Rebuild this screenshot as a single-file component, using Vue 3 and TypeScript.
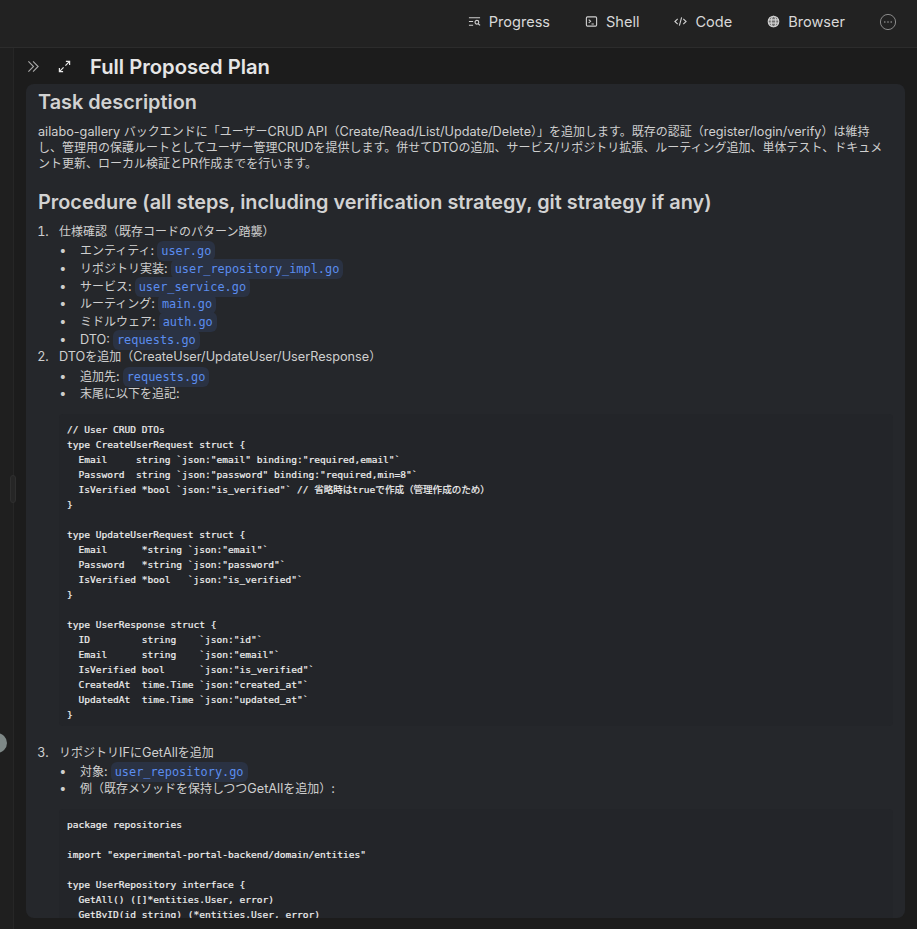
<script setup lang="ts">
const tabs = ['Progress', 'Shell', 'Code', 'Browser']

type Item = { text: string; code?: string }
type Step = { title: string; items: Item[]; block?: string }

const cjkRun = /[\u3000-\u30ff\u4e00-\u9fff\uff00-\uffef]+|[^\u3000-\u30ff\u4e00-\u9fff\uff00-\uffef]+/g
const isCjk = (s: string) => /[\u3000-\u30ff\u4e00-\u9fff\uff00-\uffef]/.test(s)
const runs = (s: string) => s.match(cjkRun) ?? []

const intro = [
  'ailabo-gallery バックエンドに「ユーザーCRUD API（Create/Read/List/Update/Delete）」を追加します。既存の認証（register/login/verify）は維持',
  'し、管理用の保護ルートとしてユーザー管理CRUDを提供します。併せてDTOの追加、サービス/リポジトリ拡張、ルーティング追加、単体テスト、ドキュメ',
  'ント更新、ローカル検証とPR作成までを行います。',
].flatMap(runs)

const dtoCode = `// User CRUD DTOs
type CreateUserRequest struct {
  Email     string \`json:"email" binding:"required,email"\`
  Password  string \`json:"password" binding:"required,min=8"\`
  IsVerified *bool \`json:"is_verified"\` // 省略時はtrueで作成（管理作成のため）
}

type UpdateUserRequest struct {
  Email      *string \`json:"email"\`
  Password   *string \`json:"password"\`
  IsVerified *bool   \`json:"is_verified"\`
}

type UserResponse struct {
  ID         string    \`json:"id"\`
  Email      string    \`json:"email"\`
  IsVerified bool      \`json:"is_verified"\`
  CreatedAt  time.Time \`json:"created_at"\`
  UpdatedAt  time.Time \`json:"updated_at"\`
}`
const repoCode = `package repositories

import "experimental-portal-backend/domain/entities"

type UserRepository interface {
  GetAll() ([]*entities.User, error)
  GetByID(id string) (*entities.User, error)
  GetByEmail(email string) (*entities.User, error)
}`

const steps: Step[] = [
  {
    title: '仕様確認（既存コードのパターン踏襲）',
    items: [
      { text: 'エンティティ:', code: 'user.go' },
      { text: 'リポジトリ実装:', code: 'user_repository_impl.go' },
      { text: 'サービス:', code: 'user_service.go' },
      { text: 'ルーティング:', code: 'main.go' },
      { text: 'ミドルウェア:', code: 'auth.go' },
      { text: 'DTO:', code: 'requests.go' },
    ],
  },
  {
    title: 'DTOを追加（CreateUser/UpdateUser/UserResponse）',
    items: [{ text: '追加先:', code: 'requests.go' }, { text: '末尾に以下を追記:' }],
    block: dtoCode,
  },
  {
    title: 'リポジトリIFにGetAllを追加',
    items: [
      { text: '対象:', code: 'user_repository.go' },
      { text: '例（既存メソッドを保持しつつGetAllを追加）:' },
    ],
    block: repoCode,
  },
]
</script>

<template>
  <div class="app">
    <header class="topbar">
      <button v-for="(t, i) in tabs" :key="t" class="tab">
        <svg v-if="i === 0" class="ic" viewBox="0 0 14 14" fill="none" stroke="currentColor" stroke-width="1.2">
          <path d="M1 3h12M1 7h4.5M1 11h4.5" />
          <circle cx="9.6" cy="7.8" r="2" />
          <path d="M11 9.4l2 1.8" />
        </svg>
        <svg v-else-if="i === 1" class="ic" viewBox="0 0 14 14" fill="none" stroke="currentColor" stroke-width="1.2">
          <rect x="1.5" y="2" width="11" height="10" rx="1.2" />
          <path d="M4 5l2 1.7L4 8.4M7 9.7h2.5" />
        </svg>
        <svg v-else-if="i === 2" class="ic" viewBox="0 0 14 14" fill="none" stroke="currentColor" stroke-width="1.2">
          <path d="M4 4.2L1 7l3 2.8M10 4.2L13 7l-3 2.8M8.2 2.5L5.8 11.5" />
        </svg>
        <svg v-else class="ic" viewBox="0 0 14 14" fill="none" stroke="currentColor" stroke-width="1.2">
          <circle cx="7" cy="7" r="5.7" fill="currentColor" fill-opacity=".45" />
          <ellipse cx="7" cy="7" rx="2.4" ry="5.7" />
          <path d="M1.5 5.2h11M1.5 8.8h11" />
        </svg>
        <span>{{ t }}</span>
      </button>
      <svg class="more" viewBox="0 0 18 18" fill="none">
        <circle cx="9" cy="9" r="7.6" stroke="#8a8a8a" stroke-width="1" />
        <circle cx="5.8" cy="9" r=".8" fill="#9a9a9a" />
        <circle cx="9" cy="9" r=".8" fill="#9a9a9a" />
        <circle cx="12.2" cy="9" r=".8" fill="#9a9a9a" />
      </svg>
    </header>

    <div class="body">
      <aside class="rail">
        <span class="handle"></span>
        <span class="dot"></span>
      </aside>
      <main class="main">
        <div class="titlebar">
          <svg class="chev" viewBox="0 0 14 14" fill="none" stroke="#a8a8a8" stroke-width="1.2">
            <path d="M1.5 1.5L7 7l-5.5 5.5M6.5 1.5L12 7l-5.5 5.5" />
          </svg>
          <svg class="expand" viewBox="0 0 14 14" fill="none" stroke="#e8e8e8" stroke-width="1.3">
            <path d="M8 6l4.2-4.2M8.5 1.5h4v4M6 8l-4.2 4.2M1.5 8.5v4h4" />
          </svg>
          <h1>Full Proposed Plan</h1>
        </div>
        <section class="card">
          <h2>Task description</h2>
          <p><span v-for="(r, i) in intro" :key="i" :class="{ cj: isCjk(r) }">{{ r }}</span></p>
          <h2 class="second">Procedure (all steps, including verification strategy, git strategy if any)</h2>
          <ol>
            <li v-for="s in steps" :key="s.title">
              <span v-for="(r, i) in runs(s.title)" :key="i" :class="{ cj: isCjk(r) }">{{ r }}</span>
              <ul>
                <li v-for="it in s.items" :key="it.text">
                  <span v-for="(r, i) in runs(it.text)" :key="i" :class="{ cj: isCjk(r) }">{{ r }}</span>
                  <code v-if="it.code">{{ it.code }}</code>
                </li>
              </ul>
              <pre v-if="s.block">{{ s.block }}</pre>
            </li>
          </ol>
        </section>
      </main>
    </div>
  </div>
</template>

<style>
html, body { background: #1c1c1c; }
</style>

<style scoped>
.app {
  width: 917px;
  height: 929px;
  overflow: hidden;
  display: flex;
  flex-direction: column;
  background: #1c1c1c;
  color: #cfcfcf;
  font-family: Inter, "Noto Sans CJK JP", sans-serif;
}
.topbar {
  height: 43px;
  flex: none;
  box-sizing: content-box;
  background: #222222;
  border-bottom: 1px solid #2c2c2c;
  display: flex;
  align-items: center;
  justify-content: flex-end;
  padding: 0 20px 4px 0;
  gap: 35px;
}
.tab {
  display: flex;
  align-items: center;
  gap: 8px;
  border: 0;
  background: none;
  padding: 0;
  color: #d8d8d8;
  font: 400 14.55px Inter, sans-serif;
}
.ic { width: 13px; height: 13px; color: #d0d0d0; }
.more { width: 18px; height: 18px; margin-left: -1px; }
.body { flex: 1; display: flex; min-height: 0; }
.rail {
  width: 13px;
  flex: none;
  position: relative;
  background: #1f1f1f;
  border-right: 1px solid #262626;
}
.handle {
  position: absolute;
  left: 10px;
  top: 427px;
  width: 6px;
  height: 28px;
  box-sizing: border-box;
  border: 1px solid #2f2f2f;
  border-radius: 3px;
  background: #262626;
}
.dot {
  position: absolute;
  left: -13px;
  top: 685px;
  width: 20px;
  height: 20px;
  border-radius: 50%;
  background: #7e8887;
}
.main {
  flex: 1;
  min-width: 0;
  padding: 0 12px 11px 12px;
  display: flex;
  flex-direction: column;
}
.titlebar {
  height: 36px;
  flex: none;
  display: flex;
  align-items: center;
}
.chev { width: 13px; height: 13px; margin-left: 1px; }
.expand { width: 13px; height: 13px; margin-left: 18px; }
h1 {
  margin: 0 0 0 19px;
  font-size: 20.2px;
  font-weight: 600;
  color: #e6e6e6;
}
.card {
  flex: 1;
  min-height: 0;
  overflow: hidden;
  background: #25272b;
  border-radius: 8px;
  padding: 6px 12px;
  font-size: 12.7px;
  line-height: 16px;
}
.cj { font-size: 12px; }
h2 {
  margin: 0;
  font-size: 19.85px;
  font-weight: 600;
  line-height: 24px;
  color: #d2d2d2;
}
.second { margin-top: 18px; }
p { margin: 10px 0 0; }
ol { margin: 9px 0 0; padding: 0 0 0 21px; line-height: 17.7px; }
ol > li::marker { content: counter(list-item) ".   "; }
ul { margin: 1.5px 0 0; padding: 0 0 0 21px; }
ul > li::marker { content: "•    "; }
code {
  font-family: "DejaVu Sans Mono", monospace;
  font-size: 11.9px;
  line-height: 1;
  color: #5b8def;
  background: #2a3243;
  border-radius: 6px;
  padding: 3px 4px;
  margin-left: 3px;
}
pre {
  margin: 11px 0 17.5px;
  padding: 8px 8px 4px;
  background: #232529;
  border-radius: 4px;
  font-family: "DejaVu Sans Mono", "Noto Sans CJK JP", monospace;
  font-size: 9.55px;
  line-height: 15px;
  color: #f0f0f0;
  -webkit-text-stroke: .2px #f0f0f0;
  white-space: pre;
}
</style>
